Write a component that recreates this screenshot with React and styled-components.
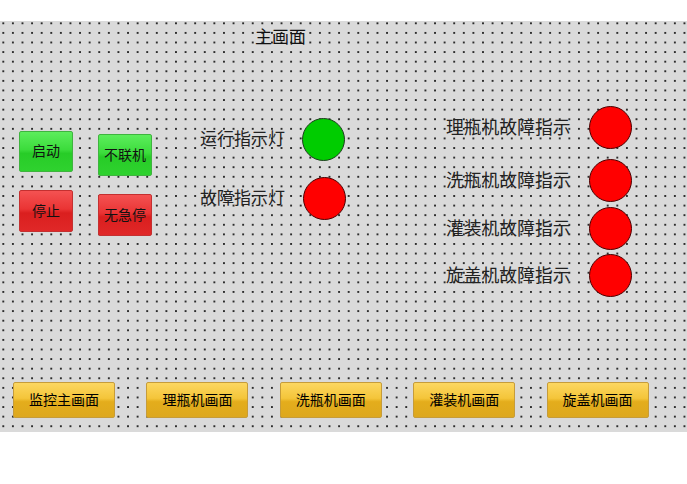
import React from "react";
import styled, { createGlobalStyle } from "styled-components";

const GlobalStyle = createGlobalStyle`
  html, body {
    margin: 0;
    padding: 0;
    background: #ffffff;
  }
  body {
    font-family: "Noto Sans CJK SC", "Noto Sans", sans-serif;
  }
`;

const Page = styled.div`
  width: 687px;
  height: 484px;
  padding-top: 21px;
  box-sizing: border-box;
`;

const Canvas = styled.div`
  height: 411px;
  display: flex;
  flex-direction: column;
  background-color: #dadada;
  background-image: radial-gradient(circle, #000 0.62px, transparent 0.9px);
  background-size: 9.6px 9.6px;
  background-position: -1.5px -2.5px;
`;

const Title = styled.div`
  padding: 5px 0 0 255px;
  height: 20px;
  line-height: 20px;
  font-size: 17px;
  color: #111;
`;

const Middle = styled.div`
  display: flex;
  align-items: flex-start;
  margin-top: 60px;
`;

const ButtonPad = styled.div`
  display: flex;
  gap: 25px;
  margin: 25px 0 0 19px;
`;

const PadColumn = styled.div`
  display: flex;
  flex-direction: column;
  gap: 18px;
  margin-top: ${(p) => p.$offset || 0}px;
`;

const palettes = {
  green: {
    border: "#3fb43f",
    bg: "linear-gradient(to bottom, #5ced5c 0%, #3cdc3c 45%, #27cc27 55%, #2fd22f 100%)",
  },
  red: {
    border: "#c43030",
    bg: "linear-gradient(to bottom, #f45252 0%, #ea3434 45%, #da1f1f 55%, #e02828 100%)",
  },
};

const PadButton = styled.button`
  width: 54px;
  height: ${(p) => p.$h}px;
  box-sizing: border-box;
  border: 1px solid ${(p) => palettes[p.$tone].border};
  border-radius: 2px;
  background: ${(p) => palettes[p.$tone].bg};
  font-family: inherit;
  font-size: ${(p) => p.$fs}px;
  color: #111;
  padding: 0 0 3px;
  display: flex;
  align-items: center;
  justify-content: center;
`;

const Lamps = styled.div`
  display: flex;
  flex-direction: column;
  gap: 16px;
  margin: 12px 0 0 48px;
`;

const LampRow = styled.div`
  display: flex;
  align-items: center;
  margin-top: ${(p) => p.$mt || 0}px;
`;

const LampLabel = styled.span`
  width: ${(p) => p.$w}px;
  font-size: ${(p) => p.$fs}px;
  line-height: 20px;
  padding-bottom: 3px;
  color: #222;
  white-space: nowrap;
`;

const Lamp = styled.span`
  width: 43px;
  height: 43px;
  box-sizing: border-box;
  border-radius: 50%;
  border: 1px solid ${(p) => (p.$on ? "#1d3d1d" : "#4a0000")};
  background: ${(p) => (p.$on ? "#00cc00" : "#ff0000")};
`;

const FaultList = styled.div`
  display: flex;
  flex-direction: column;
  margin-left: 100px;
`;

const Nav = styled.div`
  display: flex;
  gap: 31.4px;
  margin-top: auto;
  padding: 0 0 14px 13px;
`;

const NavButton = styled.button`
  width: 102px;
  height: 36px;
  box-sizing: border-box;
  border: 1px solid #c69c3a;
  border-radius: 2px;
  background: linear-gradient(to bottom, #fcd761 0%, #f4c53a 45%, #e4ad1c 55%, #dda81e 100%);
  font-family: inherit;
  font-size: 14px;
  color: #000;
  padding: 0 0 3px;
`;

const faults = [
  { label: "理瓶机故障指示", mt: 0 },
  { label: "洗瓶机故障指示", mt: 10 },
  { label: "灌装机故障指示", mt: 5 },
  { label: "旋盖机故障指示", mt: 4 },
];

const screens = ["监控主画面", "理瓶机画面", "洗瓶机画面", "灌装机画面", "旋盖机画面"];

export default function App() {
  return (
    <Page>
      <GlobalStyle />
      <Canvas>
        <Title>主画面</Title>
        <Middle>
          <ButtonPad>
            <PadColumn>
              <PadButton $tone="green" $h={41} $fs={14}>启动</PadButton>
              <PadButton $tone="red" $h={42} $fs={14}>停止</PadButton>
            </PadColumn>
            <PadColumn $offset={3}>
              <PadButton $tone="green" $h={42} $fs={14}>不联机</PadButton>
              <PadButton $tone="red" $h={42} $fs={14}>无急停</PadButton>
            </PadColumn>
          </ButtonPad>
          <Lamps>
            <LampRow>
              <LampLabel $w={102} $fs={17}>运行指示灯</LampLabel>
              <Lamp $on />
            </LampRow>
            <LampRow>
              <LampLabel $w={103} $fs={17}>故障指示灯</LampLabel>
              <Lamp />
            </LampRow>
          </Lamps>
          <FaultList>
            {faults.map((f) => (
              <LampRow key={f.label} $mt={f.mt}>
                <LampLabel $w={143} $fs={17.8}>{f.label}</LampLabel>
                <Lamp />
              </LampRow>
            ))}
          </FaultList>
        </Middle>
        <Nav>
          {screens.map((s) => (
            <NavButton key={s}>{s}</NavButton>
          ))}
        </Nav>
      </Canvas>
    </Page>
  );
}
